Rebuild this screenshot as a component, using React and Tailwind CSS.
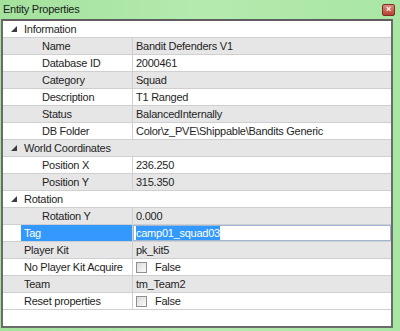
import React from 'react';

const rows = [
  { kind: 'cat', label: 'Information' },
  { kind: 'child', label: 'Name', value: 'Bandit Defenders V1' },
  { kind: 'child', label: 'Database ID', value: '2000461' },
  { kind: 'child', label: 'Category', value: 'Squad' },
  { kind: 'child', label: 'Description', value: 'T1 Ranged' },
  { kind: 'child', label: 'Status', value: 'BalancedInternally' },
  { kind: 'child', label: 'DB Folder', value: 'Color\\z_PVE\\Shippable\\Bandits Generic' },
  { kind: 'cat', label: 'World Coordinates' },
  { kind: 'child', label: 'Position X', value: '236.250' },
  { kind: 'child', label: 'Position Y', value: '315.350' },
  { kind: 'cat', label: 'Rotation' },
  { kind: 'child', label: 'Rotation Y', value: '0.000' },
  { kind: 'selected', label: 'Tag', value: 'camp01_squad03' },
  { kind: 'top', label: 'Player Kit', value: 'pk_kit5' },
  { kind: 'top', label: 'No Player Kit Acquire', value: 'False', check: true },
  { kind: 'top', label: 'Team', value: 'tm_Team2' },
  { kind: 'top', label: 'Reset properties', value: 'False', check: true },
];

const Expander = () => (
  <svg width="6" height="6" viewBox="0 0 6 6" className="block">
    <polygon points="6,0 6,6 0,6" fill="#3c3c3c" />
  </svg>
);

const Check = () => (
  <span className="inline-block w-[11px] h-[11px] border border-[#8e8f8f] bg-gradient-to-br from-[#dcdcdc] to-[#fafafa] mr-[8px]" />
);

const Row = ({ row, index }) => {
  const bg = index % 2 === 0 ? 'bg-white' : 'bg-[#e6e6e6]';

  if (row.kind === 'cat') {
    return (
      <div className={`flex h-[17px] border-b border-[#cfcfcf] ${bg}`}>
        <div className="w-[18px] flex items-center justify-center pl-[3px]">
          <Expander />
        </div>
        <div className="pl-[3px] flex items-center">{row.label}</div>
      </div>
    );
  }

  if (row.kind === 'selected') {
    return (
      <div className="flex h-[17px] border-b border-[#cfcfcf] bg-white">
        <div className="w-[18px]" />
        <div className="w-[112px] bg-[#3399ff] text-white pl-[3px] flex items-center border-r border-[#cfcfcf]">
          {row.label}
        </div>
        <div className="flex-1 flex items-center border border-[#9fb6d6] bg-white pl-[2px]">
          <span className="bg-[#3399ff] text-white leading-[14px]">{row.value}</span>
        </div>
      </div>
    );
  }

  const pad = row.kind === 'child' ? 'pl-[21px]' : 'pl-[3px]';
  return (
    <div className={`flex h-[17px] border-b border-[#cfcfcf] ${bg}`}>
      <div className="w-[18px]" />
      <div className={`w-[112px] ${pad} flex items-center border-r border-[#cfcfcf] whitespace-nowrap overflow-hidden`}>
        {row.label}
      </div>
      <div className="flex-1 flex items-center pl-[3px] whitespace-nowrap overflow-hidden">
        {row.check && <Check />}
        {row.value}
      </div>
    </div>
  );
};

export default function App() {
  return (
    <div
      className="w-[400px] h-[331px] flex flex-col bg-gradient-to-r from-[#a3e29d] via-[#b4eaae] to-[#a9e6a3] text-[11px] tracking-[-0.25px] text-[#1e1e1e]"
      style={{ fontFamily: '"Liberation Sans", Arial, sans-serif' }}
    >
      {/* Title bar */}
      <div className="h-[19px] flex items-center justify-between pl-[3px] pr-[5px]">
        <span className="text-[11px] text-[#1b1b1b]">Entity Properties</span>
        <span className="w-[13px] h-[12px] rounded-[2px] bg-gradient-to-b from-[#e08a7a] to-[#b84030] border border-[#7a3028] flex items-center justify-center text-white text-[9px] font-bold leading-none">
          ×
        </span>
      </div>

      {/* Property grid */}
      <div className="flex-1 ml-[1px] mr-[7px] mb-[3px] border-2 border-[#6b6b6b] border-t-[#5e5e5e] bg-white overflow-hidden">
        {rows.map((row, i) => (
          <Row key={row.label} row={row} index={i} />
        ))}
      </div>
    </div>
  );
}
